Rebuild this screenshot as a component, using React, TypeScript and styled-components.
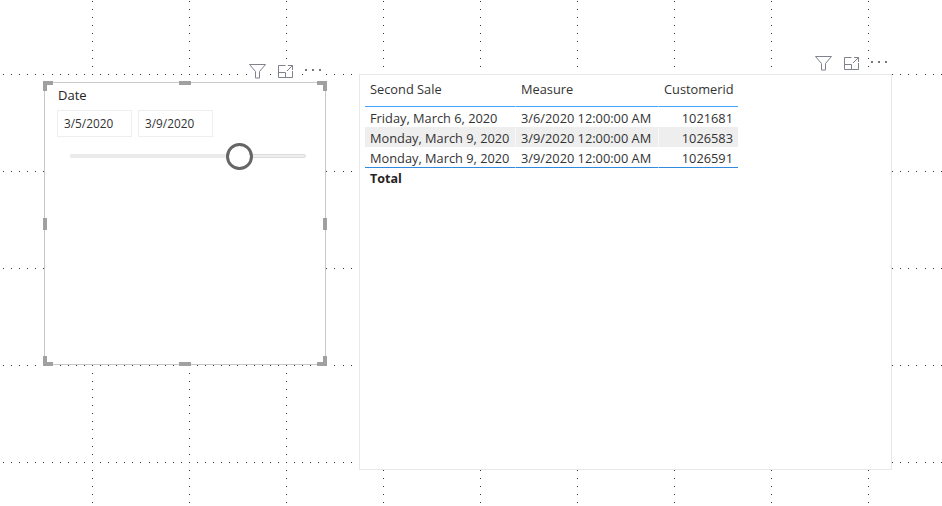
import { createGlobalStyle, styled } from 'styled-components'

const GlobalStyle = createGlobalStyle`
  html, body {
    margin: 0;
    padding: 0;
    background: #fff;
  }
  body {
    font-family: "Open Sans", "Noto Sans", "Liberation Sans", sans-serif;
  }
`

// the report canvas dots: 12 per 97px cell, snapped to whole pixels
const DOT = 'conic-gradient(at 1px 1px, transparent 75%, #333 0)'
const steps = Array.from({ length: 12 }, (_, k) => Math.round((k * 97) / 12))
const dotLayers = [...steps, ...steps].map(() => DOT).join(', ')
const dotPositions = [
  ...steps.map((s) => `${s + 3}px 74px`),
  ...steps.map((s) => `92px ${s + 1}px`),
].join(', ')

const Canvas = styled.div`
  position: relative;
  width: 942px;
  height: 506px;
  overflow: hidden;
  background-color: #fff;
  background-image: ${dotLayers};
  background-size: 97px 97px;
  background-position: ${dotPositions};
`

const Visual = styled.section<{ $x: number; $y: number; $w: number; $h: number }>`
  position: absolute;
  left: ${(p) => p.$x}px;
  top: ${(p) => p.$y}px;
  width: ${(p) => p.$w}px;
  height: ${(p) => p.$h}px;
  box-sizing: border-box;
  background: #fff;
`

const Slicer = styled(Visual)`
  border: 1px solid #c8c8c8;
  padding: 3px 12px;
`

const TablePanel = styled(Visual)`
  border: 1px solid #e8e8e8;
  padding: 5px;
`

const Handle = styled.span<{ $x: 'left' | 'center' | 'right'; $y: 'top' | 'middle' | 'bottom' }>`
  position: absolute;
  background: #a0a0a0;
  ${(p) => (p.$x === 'left' ? 'left: -2px;' : p.$x === 'right' ? 'right: -2px;' : 'left: calc(50% - 6px);')}
  ${(p) => (p.$y === 'top' ? 'top: -2px;' : p.$y === 'bottom' ? 'bottom: -2px;' : 'top: calc(50% - 6px);')}
  width: ${(p) => (p.$x === 'center' ? 12 : 4)}px;
  height: ${(p) => (p.$y === 'middle' ? 12 : 4)}px;
`

const Corner = styled.span<{ $x: 'left' | 'right'; $y: 'top' | 'bottom' }>`
  position: absolute;
  width: 10px;
  height: 10px;
  ${(p) => `${p.$x}: -2px; ${p.$y}: -2px;`}
  border-${(p) => p.$x}: 4px solid #a0a0a0;
  border-${(p) => p.$y}: 4px solid #a0a0a0;
  box-sizing: border-box;
`

const Header = styled.div<{ $x: number; $y: number }>`
  position: absolute;
  left: ${(p) => p.$x}px;
  top: ${(p) => p.$y}px;
  display: flex;
  align-items: center;
  gap: 5px;
  height: 18px;
`

const HeaderIcon = styled.span<{ $left: number; $right: number }>`
  display: flex;
  align-items: flex-start;
  padding: 0 ${(p) => p.$right}px 0 ${(p) => p.$left}px;
  height: 18px;
  background: #fff;

  svg {
    display: block;
  }
`

const SlicerTitle = styled.div`
  margin-left: 1px;
  font-size: 13px;
  line-height: 18px;
  color: #252423;
`

const DateRow = styled.div`
  display: flex;
  gap: 6px;
  margin-top: 6px;
`

const DateBox = styled.div`
  width: 75px;
  height: 27px;
  box-sizing: border-box;
  border: 1px solid #eee;
  padding-left: 6px;
  font-size: 11.8px;
  line-height: 25px;
  color: #333;
`

const Track = styled.div`
  position: relative;
  width: 234px;
  height: 2px;
  margin: 17px 0 0 13px;
  background: #efefef;
  border: 1px solid #dcdcdc;
  border-radius: 2px;
`

const TrackFill = styled.span`
  position: absolute;
  left: -1px;
  top: -1px;
  bottom: -1px;
  background: #ebebeb;
  border-radius: 2px 0 0 2px;
`

const Thumb = styled.span`
  position: absolute;
  left: 155px;
  top: -12px;
  width: 27px;
  height: 27px;
  box-sizing: border-box;
  border-radius: 50%;
  border: 3px solid #666;
  background: #fff;
`

const Table = styled.table`
  border-collapse: separate;
  border-spacing: 0;
  table-layout: fixed;
  width: 373px;
  font-size: 12.8px;
  color: #333;
`

const HeadCell = styled.th<{ $right?: boolean; $first?: boolean }>`
  height: 26px;
  box-sizing: border-box;
  padding: 0 ${(p) => (p.$right ? 7 : 5)}px 8px 5px;
  font-weight: 400;
  text-align: ${(p) => (p.$right ? 'right' : 'left')};
  border-bottom: 1px solid #41a4ff;
  border-left: ${(p) => (p.$first ? '0' : '1px solid #fff')};
`

const Row = styled.tr<{ $shaded?: boolean }>`
  height: 20px;
  background: ${(p) => (p.$shaded ? '#eee' : 'transparent')};
`

const Cell = styled.td<{ $right?: boolean; $first?: boolean }>`
  padding: 2px 5px 0;
  white-space: nowrap;
  text-align: ${(p) => (p.$right ? 'right' : 'left')};
  border-left: ${(p) => (p.$first ? '0' : '1px solid rgba(255, 255, 255, 0.5)')};
`

const TotalCell = styled.td<{ $first?: boolean }>`
  padding: 0 5px;
  height: 20px;
  font-size: 12.5px;
  font-weight: 700;
  border-top: 1px solid #2f8ae0;
  border-left: ${(p) => (p.$first ? '0' : '1px solid #fff')};
  color: #252423;
`

const rows = [
  { sale: 'Friday, March 6, 2020', measure: '3/6/2020 12:00:00 AM', id: 1021681 },
  { sale: 'Monday, March 9, 2020', measure: '3/9/2020 12:00:00 AM', id: 1026583 },
  { sale: 'Monday, March 9, 2020', measure: '3/9/2020 12:00:00 AM', id: 1026591 },
]

function HeaderIcons() {
  return (
    <>
      <HeaderIcon $left={1} $right={1}>
        <svg width="17" height="18" viewBox="0 0 17 18" fill="none" stroke="#80828c" strokeWidth="1">
          <path d="M.5 2.500h16L10.500 9.500v6.500h-4V9.500z" />
        </svg>
      </HeaderIcon>
      <HeaderIcon $left={6} $right={6}>
        <svg width="16" height="18" viewBox="0 0 16 18" fill="none" stroke="#80828c" strokeWidth="1">
          <path d="M7.500 3.500h-7v12h14V9M.5 10.500h7v5M9 9l5.500-5.500M10 3.500h4.500V8" />
        </svg>
      </HeaderIcon>
      <HeaderIcon $left={0} $right={3}>
        <svg width="16" height="18" viewBox="0 0 16 18" fill="#777">
          <rect x="0" y="7" width="2" height="2" />
          <rect x="7" y="7" width="2" height="2" />
          <rect x="14" y="7" width="2" height="2" />
        </svg>
      </HeaderIcon>
    </>
  )
}

export default function App() {
  return (
    <>
      <GlobalStyle />
      <Canvas>
        <Slicer $x={44} $y={82} $w={282} $h={283}>
          <Corner $x="left" $y="top" />
          <Corner $x="right" $y="top" />
          <Corner $x="left" $y="bottom" />
          <Corner $x="right" $y="bottom" />
          <Handle $x="center" $y="top" />
          <Handle $x="center" $y="bottom" />
          <Handle $x="left" $y="middle" />
          <Handle $x="right" $y="middle" />
          <SlicerTitle>Date</SlicerTitle>
          <DateRow>
            <DateBox>3/5/2020</DateBox>
            <DateBox>3/9/2020</DateBox>
          </DateRow>
          <Track>
            <TrackFill style={{ width: 160 }} />
            <Thumb />
          </Track>
        </Slicer>
        <Header $x={248} $y={62}>
          <HeaderIcons />
        </Header>

        <TablePanel $x={359} $y={74} $w={533} $h={396}>
          <Table>
            <colgroup>
              <col style={{ width: 150 }} />
              <col style={{ width: 143 }} />
              <col style={{ width: 80 }} />
            </colgroup>
            <thead>
              <tr>
                <HeadCell $first>Second Sale</HeadCell>
                <HeadCell>Measure</HeadCell>
                <HeadCell $right>Customerid</HeadCell>
              </tr>
            </thead>
            <tbody>
              {rows.map((row, i) => (
                <Row key={row.id} $shaded={i === 1}>
                  <Cell $first>{row.sale}</Cell>
                  <Cell>{row.measure}</Cell>
                  <Cell $right>{row.id}</Cell>
                </Row>
              ))}
              <tr>
                <TotalCell $first>Total</TotalCell>
                <TotalCell />
                <TotalCell />
              </tr>
            </tbody>
          </Table>
        </TablePanel>
        <Header $x={814} $y={54}>
          <HeaderIcons />
        </Header>
      </Canvas>
    </>
  )
}
